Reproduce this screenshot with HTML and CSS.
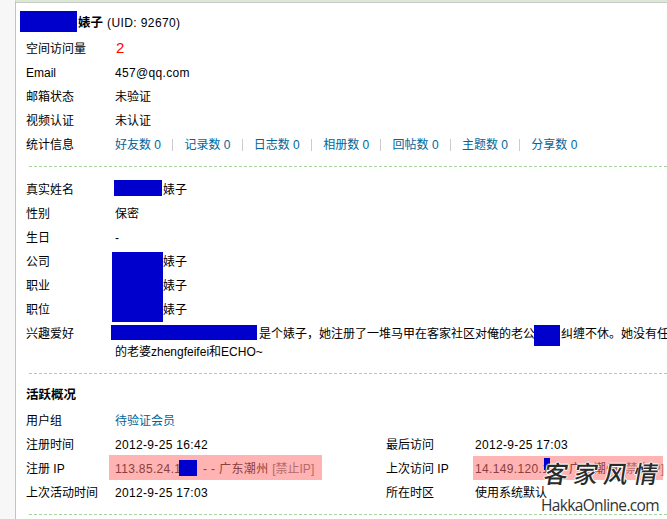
FILE: index.html
```html
<!DOCTYPE html>
<html lang="zh">
<head>
<meta charset="utf-8">
<title>个人资料</title>
<link rel="stylesheet" href="styles.css">
</head>
<body>
<div class="page">
  <div class="rail"></div>
  <main class="panel">
    <h2 class="name"><span class="mask mask-name"></span><b>婊子</b> <span class="uid">(UID: 92670)</span></h2>
    <div class="rows">
      <div class="label">空间访问量</div><div class="value"><span class="red">2</span></div>
      <div class="label">Email</div><div class="value num">457@qq.com</div>
      <div class="label">邮箱状态</div><div class="value">未验证</div>
      <div class="label">视频认证</div><div class="value">未认证</div>
      <div class="label">统计信息</div>
      <div class="value stats">
        <a>好友数 0</a><i></i><a>记录数 0</a><i></i><a>日志数 0</a><i></i><a>相册数 0</a><i></i><a>回帖数 0</a><i></i><a>主题数 0</a><i></i><a>分享数 0</a>
      </div>
    </div>
    <hr class="rule">
    <div class="rows">
      <div class="label">真实姓名</div><div class="value"><span class="mask mask-real"></span><span class="after">婊子</span></div>
      <div class="label">性别</div><div class="value">保密</div>
      <div class="label">生日</div><div class="value">-</div>
      <div class="label">公司</div><div class="value"><span class="mask mask-stack"></span><span class="after">婊子</span></div>
      <div class="label">职业</div><div class="value"><span class="after">婊子</span></div>
      <div class="label">职位</div><div class="value"><span class="after">婊子</span></div>
      <div class="label">兴趣爱好</div>
      <div class="value hobby"><span class="mask mask-hobby"></span><span class="mask mask-husband"></span><span class="hobby-a">是个婊子，她注册了一堆马甲在客家社区对俺的老公</span><span class="hobby-b">纠缠不休。她没有任</span><br>的老婆zhengfeifei和ECHO~</div>
    </div>
    <hr class="rule rule-low">
    <h3 class="title">活跃概况</h3>
    <div class="rows rows-wide">
      <div class="label">用户组</div><div class="value wide"><a>待验证会员</a></div>
      <div class="label">注册时间</div><div class="value num">2012-9-25 16:42</div>
      <div class="label">最后访问</div><div class="value num">2012-9-25 17:03</div>
      <div class="label">注册 IP</div><div class="value ip ip-tall"><span class="mask mask-ip"></span>113.85.24.1<span class="gap"></span> - - 广东潮州 <em>[禁止IP]</em></div>
      <div class="label">上次访问 IP</div><div class="value ip ip-short">14.149.120.1 - - 广东潮州 <em>[禁止IP]</em></div>
      <div class="label">上次活动时间</div><div class="value num">2012-9-25 17:03</div>
      <div class="label">所在时区</div><div class="value">使用系统默认</div>
    </div>
    <hr class="rule">
  </main>
</div>
<div class="mark">
  <span class="mark-dot"></span>
  <div class="mark-cn"><span>客</span><span>家</span><span>风</span><span>情</span></div>
  <div class="mark-en">HakkaOnline.com</div>
</div>
</body>
</html>
```
FILE: styles.css
```css
html, body {
  margin: 0;
  height: 519px;
  overflow: hidden;
  background: #fff;
}
body {
  position: relative;
  font: 12px/24px "Liberation Sans", "Noto Sans CJK SC", sans-serif;
  color: #000;
}
.page {
  display: flex;
  height: 519px;
}
.rail {
  flex: 0 0 15px;
  background: #f7f7f7;
}
.panel {
  flex: 1;
  min-width: 0;
  border-left: 1px solid #a8d5a0;
  border-top: 2px solid #dce9d4;
  box-shadow: inset 0 1px 0 #c9c9c9;
  padding: 1px 0 0 10px;
}
.name {
  margin: 0 0 0 -6px;
  height: 33px;
  padding-top: 8px;
  box-sizing: border-box;
  position: relative;
  display: flex;
  gap: 4px;
  font-size: 12px;
  font-weight: normal;
  padding-left: 58px;
}
.name b {
  font-size: 12.5px;
  font-weight: 700;
}
.uid {
  letter-spacing: .4px;
}
.rows {
  display: grid;
  grid-template-columns: 89px 1fr;
}
.rows-wide {
  grid-template-columns: 89px 271px 89px 1fr;
}
.wide {
  grid-column: 2 / 5;
}
.label,
.value {
  line-height: 22px;
  padding-top: 2px;
}
.value {
  position: relative;
  white-space: nowrap;
}
.num {
  letter-spacing: .33px;
}
.red {
  color: #f00;
  font-size: 15px;
  line-height: 1;
  margin-left: 1px;
}
a {
  color: #069;
}
.stats {
  display: flex;
  align-items: center;
  gap: 11.2px;
}
.stats i {
  flex: 0 0 1px;
  height: 12px;
  background: #ccc;
}
.rule {
  margin: 10px 0 10px 3px;
  border: 0;
  border-top: 1px dashed #a6d69e;
  height: 0;
}
.rule-low {
  margin: 12px 0 9px 3px;
}
.title {
  margin: 0 0 1px;
  font-size: 12.5px;
  font-weight: 700;
  line-height: 24px;
}
.mask {
  position: absolute;
  background: #0000cc;
  z-index: 2;
}
.mask-name {
  left: 0;
  top: 8px;
  width: 57px;
  height: 21px;
}
.mask-real {
  left: -1px;
  top: 3px;
  width: 48px;
  height: 16px;
}
.after {
  margin-left: 48px;
}
.mask-stack {
  left: -3px;
  top: 3px;
  width: 51px;
  height: 70px;
}
.hobby {
  line-height: 18px;
  padding-top: 4px;
}
.mask-hobby {
  left: -4px;
  top: 4px;
  width: 146px;
  height: 15px;
}
.mask-husband {
  left: 419px;
  top: 4px;
  width: 26px;
  height: 21px;
}
.hobby-a {
  margin-left: 144px;
}
.hobby-b {
  margin-left: 26px;
}
.ip {
  background: #ffb3b3;
  color: #8a4040;
  letter-spacing: .35px;
}
.ip-short {
  margin-left: -2px;
  padding-left: 2px;
  width: 188px;
}
.ip-tall {
  margin-left: -6px;
  padding-left: 6px;
  width: 207px;
  box-shadow: 0 -1px 0 #ffb3b3;
}
.ip em {
  font-style: normal;
  color: #b56a6a;
  letter-spacing: 0;
}
.mask-ip {
  left: 70px;
  top: 4px;
  width: 18px;
  height: 16px;
}
.gap {
  display: inline-block;
  width: 18px;
}
.mark {
  position: absolute;
  left: 541px;
  top: 456px;
  width: 126px;
  z-index: 3;
}
.mark-dot {
  position: absolute;
  left: 3px;
  top: 2px;
  width: 6px;
  height: 12px;
  background: #0000cc;
}
.mark-cn {
  display: flex;
  gap: 6px;
  height: 38px;
  margin-left: 3px;
  font-size: 24px;
  line-height: 37px;
  font-weight: 500;
  color: #2b2b2b;
  text-shadow: 1px 0 0 #fff, -1px 0 0 #fff, 0 1px 0 #fff, 0 -1px 0 #fff;
}
.mark-cn span {
  display: block;
  transform: skewX(-10deg);
}
.mark-en {
  margin-top: 2px;
  font: 15.5px/18px "Open Sans", sans-serif;
  color: #333;
  letter-spacing: -.65px;
  text-shadow: 1px 0 0 #fff, -1px 0 0 #fff;
  white-space: nowrap;
}
```
